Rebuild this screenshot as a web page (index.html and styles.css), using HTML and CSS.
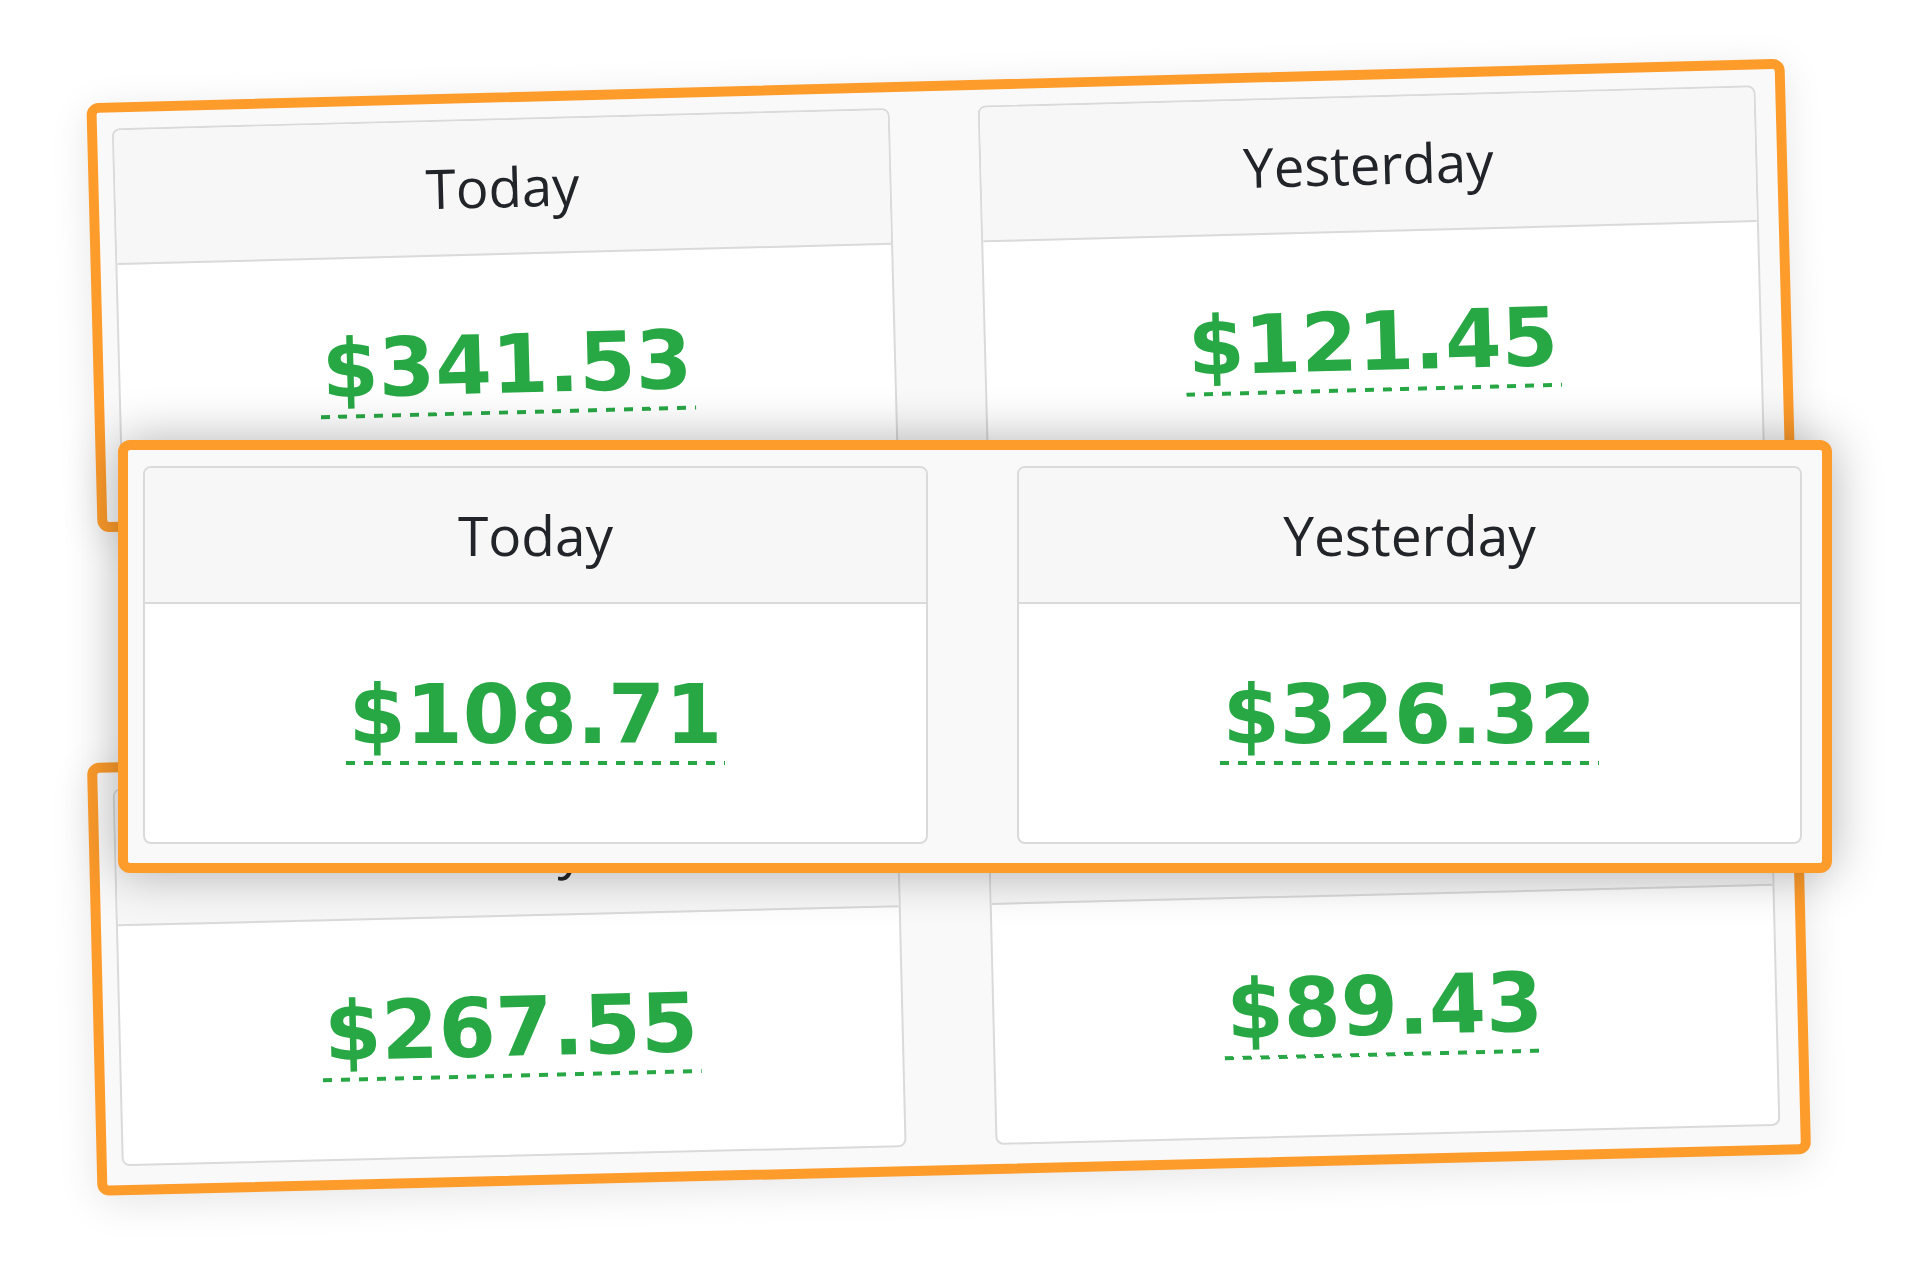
FILE: index.html
```html
<!DOCTYPE html>
<html lang="en">

<head>
    <meta charset="UTF-8">
    <meta name="viewport" content="width=device-width, initial-scale=1.0">
    <title>Sales Summary</title>
    <link rel="stylesheet" href="styles.css">
</head>

<body>
    <div class="scene">
        <div class="panel panel-top">
            <div class="card">
                <div class="card-header">Today</div>
                <div class="card-body"><span class="amount">$341.53</span></div>
            </div>
            <div class="card">
                <div class="card-header">Yesterday</div>
                <div class="card-body"><span class="amount">$121.45</span></div>
            </div>
        </div>

        <div class="panel panel-bottom">
            <div class="card">
                <div class="card-header">Today</div>
                <div class="card-body"><span class="amount">$267.55</span></div>
            </div>
            <div class="card">
                <div class="card-header">Yesterday</div>
                <div class="card-body"><span class="amount">$89.43</span></div>
            </div>
        </div>

        <div class="panel panel-middle">
            <div class="card">
                <div class="card-header">Today</div>
                <div class="card-body"><span class="amount">$108.71</span></div>
            </div>
            <div class="card">
                <div class="card-header">Yesterday</div>
                <div class="card-body"><span class="amount">$326.32</span></div>
            </div>
        </div>
    </div>
</body>

</html>
```

FILE: styles.css
```css
body {
    margin: 0;
    background-color: white;
    font-family: 'Open Sans', 'Noto Sans', sans-serif;
    color: #212529;
}

.scene {
    position: relative;
    width: 1920px;
    height: 1280px;
    overflow: hidden;
}

/* orange framed strip holding two cards */
.panel {
    position: absolute;
    width: 1714px;
    box-sizing: border-box;
    display: grid;
    grid-template-columns: 785px 785px;
    column-gap: 89px;
    padding: 16px 20px 19px 15px;
    background-color: #f9f9f9;
    border: 10px solid #fd9b2b;
    border-radius: 12px;
    box-shadow: 0 8px 40px rgba(0, 0, 0, 0.1);
}

.panel-top {
    left: 84px;
    top: 79px;
    transform: rotate(-1.5deg) scale(0.991);
}

.panel-bottom {
    left: 92px;
    top: 742px;
    transform: rotate(-1.4deg);
}

.panel-middle {
    left: 118px;
    top: 440px;
    z-index: 2;
    box-shadow: 0 0 50px rgba(0, 0, 0, 0.3);
}

.card {
    background-color: white;
    border: 2px solid #dadada;
    border-radius: 8px;
    overflow: hidden;
}

.card-header {
    background-color: #f7f7f7;
    border-bottom: 2px solid #dadada;
    padding: 29px 0 30px;
    font-size: 55px;
    line-height: 75px;
    text-align: center;
}

.card-body {
    height: 238px;
    box-sizing: border-box;
    padding-top: 65px;
    text-align: center;
}

/* dashed underline drawn as a gradient so the dash length is fixed */
.amount {
    display: inline-block;
    padding: 0 3px 4px;
    font-family: 'DejaVu Sans', Verdana, sans-serif;
    font-weight: bold;
    font-size: 82px;
    line-height: 92px;
    color: #28a745;
    background-image: repeating-linear-gradient(to right, #28a745 0 9px, transparent 9px 18px);
    background-size: 100% 4px;
    background-position: left bottom;
    background-repeat: no-repeat;
}
```
